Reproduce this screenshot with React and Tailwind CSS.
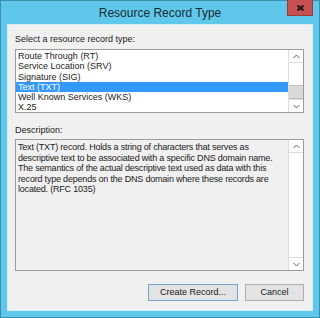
const records = [
  "Route Through (RT)",
  "Service Location (SRV)",
  "Signature (SIG)",
  "Text (TXT)",
  "Well Known Services (WKS)",
  "X.25",
];

const Chevron = ({ down }) => (
  <svg width="7" height="5" viewBox="0 0 7 5" className="block">
    <path
      d={down ? "M0.5 1 L3.5 4 L6.5 1" : "M0.5 4 L3.5 1 L6.5 4"}
      fill="none"
      stroke="#5f5f5f"
      strokeWidth="1"
    />
  </svg>
);

const ScrollBar = ({ thumb }) => (
  <div className="w-[15px] h-full flex flex-col bg-white border-l border-[#dcdcdc]">
    <div className="h-[13px] flex items-center justify-center border-b border-[#dcdcdc]">
      <Chevron />
    </div>
    <div className="flex-1 flex flex-col">
      {thumb && <div className="mt-[22px] h-[14px] bg-[#d9d9d9] border-y border-[#bcbcbc]" />}
    </div>
    <div className="h-[13px] flex items-center justify-center border-t border-[#dcdcdc]">
      <Chevron down />
    </div>
  </div>
);

export default function App() {
  return (
    <div
      className="w-[320px] h-[318px] bg-[#5fc8ea] border border-[#3b8fb0] flex flex-col text-[#1a1a1a]"
      style={{ fontFamily: '"Liberation Sans", Arial, sans-serif' }}
    >
      <div className="relative h-[23px] flex items-center justify-center">
        <span className="text-[12px] text-[#1c2a33] mt-[1px]">Resource Record Type</span>
        <div className="absolute top-[-1px] right-[6px] w-[26px] h-[16px] bg-[#c75050] border border-[#9c3a3a] border-t-0 flex items-center justify-center">
          <svg width="7" height="6" viewBox="0 0 7 6">
            <path d="M0.5 0.5 L6.5 5.5 M6.5 0.5 L0.5 5.5" stroke="#1b1b1b" strokeWidth="2" />
          </svg>
        </div>
      </div>

      <div className="mx-[6px] flex-1 bg-[#f0f0f0] border border-[#d6eef7] flex flex-col pl-[7px] pr-[8px] pt-[9px] text-[9px]">
        <div className="h-[11px] leading-[11px]">Select a resource record type:</div>
        <div className="mt-[4px] h-[64px] bg-white border border-[#9b9b9b] flex">
          <div className="flex-1 pt-[1px]">
            {records.map((r) => (
              <div
                key={r}
                className={
                  "h-[10.3px] leading-[10.3px] pl-[2px] whitespace-nowrap " +
                  (r === "Text (TXT)" ? "bg-[#3399ff] text-white" : "")
                }
              >
                {r}
              </div>
            ))}
          </div>
          <ScrollBar thumb />
        </div>

        <div className="mt-[12px] h-[11px] leading-[11px]">Description:</div>
        <div className="mt-[3px] h-[132px] bg-[#f0f0f0] border border-[#9b9b9b] flex">
          <div className="flex-1 pl-[2px] pt-[2px] leading-[10.5px] tracking-[-0.2px]">
            Text (TXT) record. Holds a string of characters that serves as descriptive text to be
            associated with a specific DNS domain name. The semantics of the actual descriptive
            text used as data with this record type depends on the DNS domain where these records
            are located. (RFC 1035)
          </div>
          <ScrollBar />
        </div>

        <div className="mt-[13px] flex justify-end gap-[7px]">
          <button className="w-[90px] h-[17px] bg-[#e3e3e3] border border-[#6fa6d8] text-[9px] leading-none">
            Create Record...
          </button>
          <button className="w-[59px] h-[17px] bg-[#e3e3e3] border border-[#adadad] text-[9px] leading-none">
            Cancel
          </button>
        </div>
      </div>
      <div className="h-[6px]" />
    </div>
  );
}
